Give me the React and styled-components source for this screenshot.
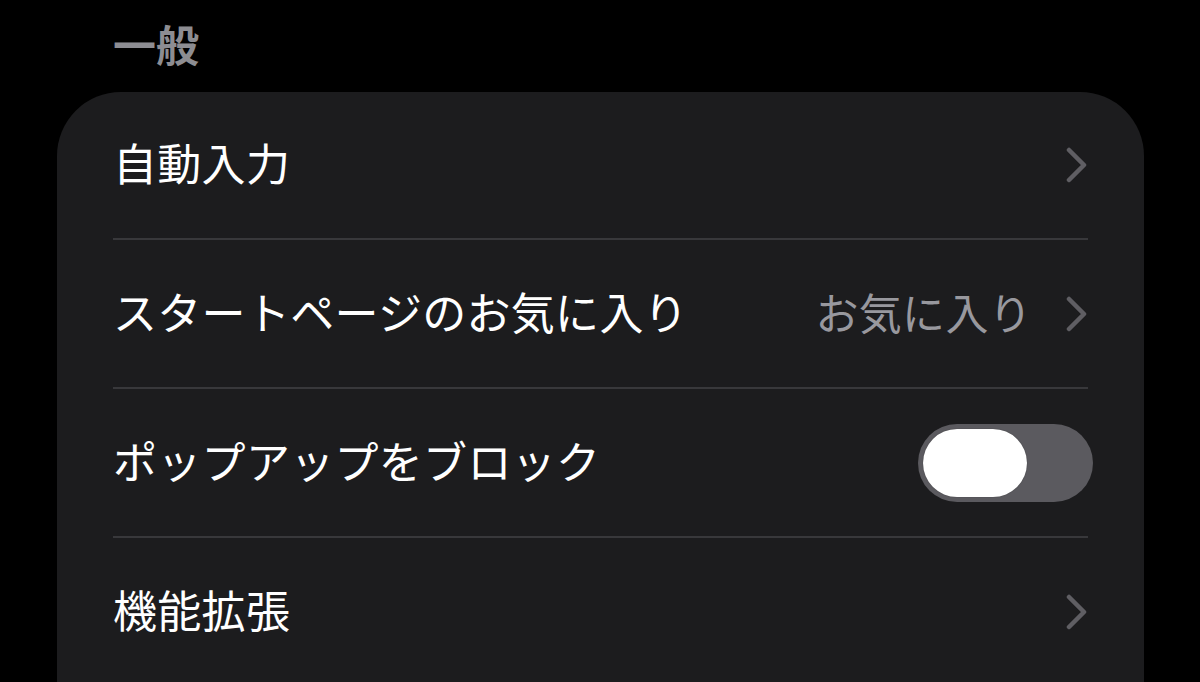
import React from 'react';
import styled, { createGlobalStyle } from 'styled-components';

const GlobalStyle = createGlobalStyle`
  html, body {
    margin: 0;
    padding: 0;
    background: #000;
    font-family: 'Noto Sans CJK JP', 'Noto Sans', sans-serif;
  }
`;

const Page = styled.div`
  width: 1200px;
  height: 682px;
  overflow: hidden;
  padding: 0 56px 0 57px;
  box-sizing: border-box;
  background: #000;
`;

const SectionTitle = styled.div`
  height: 92px;
  display: flex;
  align-items: center;
  padding-left: 56px;
  padding-bottom: 7px;
  box-sizing: border-box;
  color: #8d8d92;
  font-size: 43px;
  font-weight: 700;
`;

const Card = styled.div`
  background: #1c1c1e;
  border-radius: 64px 64px 0 0;
  padding: 0 56px;
`;

const Row = styled.div`
  height: ${(p) => (p.first ? '146px' : '147px')};
  box-sizing: content-box;
  display: flex;
  align-items: center;
  justify-content: space-between;
  border-top: ${(p) => (p.first ? 'none' : '2px solid #38383b')};
`;

const Label = styled.span`
  color: #fff;
  font-size: 44px;
  letter-spacing: 0.3px;
  margin-top: -6px;
`;

const Accessory = styled.div`
  display: flex;
  align-items: center;
  gap: 34px;
`;

const Value = styled.span`
  color: #98989e;
  font-size: 43px;
  letter-spacing: 0.3px;
  margin-top: -6px;
`;

const Track = styled.div`
  position: relative;
  width: 175px;
  height: 78px;
  border-radius: 39px;
  background: #5b5a5f;
  margin-right: -5px;
`;

const Knob = styled.div`
  position: absolute;
  top: 5px;
  left: 5px;
  width: 104px;
  height: 68px;
  border-radius: 34px;
  background: #fff;
  box-shadow: 0 0 1px rgba(0, 0, 0, 0.5);
`;

const Chevron = () => (
  <svg width="22" height="36" viewBox="0 0 22 36" fill="none">
    <polyline
      points="3,3 18,18 3,33"
      stroke="#5f5e63"
      strokeWidth="4.5"
      strokeLinecap="round"
      strokeLinejoin="round"
    />
  </svg>
);

const App = () => {
  return (
    <Page>
      <GlobalStyle />
      <SectionTitle>一般</SectionTitle>
      <Card>
        <Row first>
          <Label>自動入力</Label>
          <Chevron />
        </Row>
        <Row>
          <Label>スタートページのお気に入り</Label>
          <Accessory>
            <Value>お気に入り</Value>
            <Chevron />
          </Accessory>
        </Row>
        <Row>
          <Label>ポップアップをブロック</Label>
          <Track>
            <Knob />
          </Track>
        </Row>
        <Row>
          <Label>機能拡張</Label>
          <Chevron />
        </Row>
      </Card>
    </Page>
  );
};

export default App;
